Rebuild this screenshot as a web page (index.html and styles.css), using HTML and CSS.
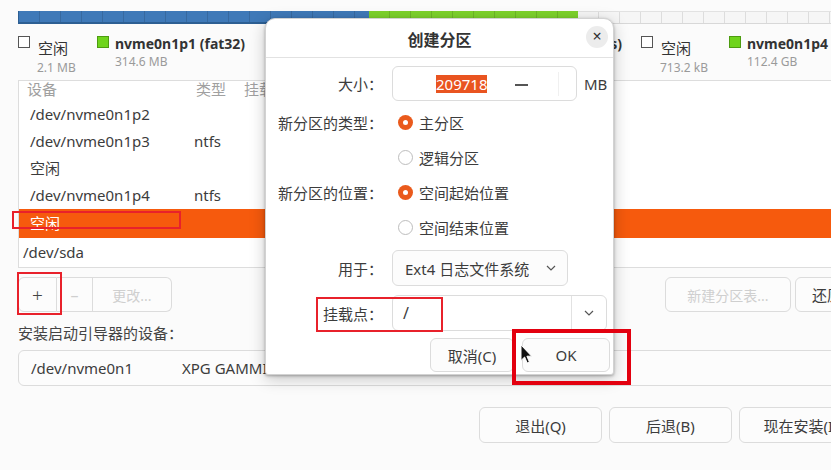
FILE: index.html
```html
<!DOCTYPE html>
<html lang="zh">
<head>
<meta charset="utf-8">
<title>创建分区</title>
<link rel="stylesheet" href="styles.css">
</head>
<body>
<div class="page">
  <div class="bar">
    <div class="seg blue"></div>
    <div class="seg green"></div>
    <div class="seg free"></div>
  </div>

  <div class="legend">
    <div class="li cjk"><span class="sw sw-free"></span><div class="lt"><div class="ln">空闲</div><div class="ls">2.1 MB</div></div></div>
    <div class="li"><span class="sw sw-green"></span><div class="lt"><div class="ln">nvme0n1p1 (fat32)</div><div class="ls">314.6 MB</div></div></div>
    <div class="li"><span class="sw sw-green"></span><div class="lt"><div class="ln">nvme0n1p2</div><div class="ls">16.8 MB</div></div></div>
    <div class="li li-end"><span class="sw sw-blue"></span><div class="lt"><div class="ln">nvme0n1p3 (ntfs)</div><div class="ls">209.7 GB</div></div></div>
    <div class="li cjk"><span class="sw sw-free"></span><div class="lt"><div class="ln">空闲</div><div class="ls">713.2 kB</div></div></div>
    <div class="li"><span class="sw sw-green"></span><div class="lt"><div class="ln">nvme0n1p4 (ntfs)</div><div class="ls">112.4 GB</div></div></div>
  </div>

  <div class="table">
    <div class="thead"><span>设备</span><span>类型</span><span>挂载点</span></div>
    <div class="row child"><span>/dev/nvme0n1p2</span><span></span><span></span></div>
    <div class="row child"><span>/dev/nvme0n1p3</span><span>ntfs</span><span></span></div>
    <div class="row child"><span>空闲</span><span></span><span></span></div>
    <div class="row child"><span>/dev/nvme0n1p4</span><span>ntfs</span><span></span></div>
    <div class="row child selected"><span>空闲</span><span></span><span></span></div>
    <div class="row top"><span>/dev/sda</span><span></span><span></span></div>
  </div>

  <div class="tools">
    <div class="group">
      <button class="btn gbtn g-plus">+</button>
      <button class="btn gbtn g-minus dis">–</button>
      <button class="btn gbtn g-change dis">更改...</button>
    </div>
    <div class="tools-right">
      <button class="btn b-newtable dis">新建分区表...</button>
      <button class="btn b-revert">还原</button>
    </div>
  </div>

  <div class="boot-label">安装启动引导器的设备：</div>
  <div class="boot-combo"><span class="bc-dev">/dev/nvme0n1</span><span class="bc-name">XPG GAMMIX S11 Pro</span></div>

  <div class="actions">
    <button class="btn act">退出(Q)</button>
    <button class="btn act">后退(B)</button>
    <button class="btn act">现在安装(I)</button>
  </div>
</div>

<div class="dialog">
  <div class="dlg-title">
    <span class="dlg-title-text">创建分区</span>
    <span class="dlg-close">×</span>
  </div>
  <div class="dlg-body">
    <div class="frow r-size">
      <span class="flabel">大小：</span>
      <div class="fctl">
        <div class="spin">
          <span class="spin-val"><span class="sel">209718</span></span>
          <span class="spin-minus"><span class="dash"></span></span>
          <span class="spin-rest"></span>
        </div>
        <span class="unit">MB</span>
      </div>
    </div>
    <div class="frow r-radio r-first">
      <span class="flabel">新分区的类型：</span>
      <div class="fctl opt"><span class="radio on"></span>主分区</div>
    </div>
    <div class="frow r-radio">
      <span class="flabel"></span>
      <div class="fctl opt"><span class="radio"></span>逻辑分区</div>
    </div>
    <div class="frow r-radio">
      <span class="flabel">新分区的位置：</span>
      <div class="fctl opt"><span class="radio on"></span>空间起始位置</div>
    </div>
    <div class="frow r-radio">
      <span class="flabel"></span>
      <div class="fctl opt"><span class="radio"></span>空间结束位置</div>
    </div>
    <div class="frow r-use">
      <span class="flabel">用于：</span>
      <div class="fctl">
        <div class="combo">
          <span>Ext4 日志文件系统</span>
          <svg class="chev" width="10" height="6" viewBox="0 0 10 6"><path d="M1 1 L5 5 L9 1" fill="none" stroke="#555" stroke-width="1.2"/></svg>
        </div>
      </div>
    </div>
    <div class="frow r-mount">
      <span class="flabel">挂载点：</span>
      <div class="fctl">
        <div class="mcombo">
          <span class="mentry">/</span>
          <span class="mbtn"><svg width="10" height="6" viewBox="0 0 10 6"><path d="M1 1 L5 5 L9 1" fill="none" stroke="#555" stroke-width="1.2"/></svg></span>
        </div>
      </div>
    </div>
    <div class="dlg-buttons">
      <button class="btn dbtn b-cancel">取消(C)</button>
      <button class="btn dbtn b-ok">OK</button>
    </div>
  </div>
</div>

<div class="mark m-row"></div>
<div class="mark m-plus"></div>
<div class="mark m-mount"></div>
<div class="mark m-ok"></div>

<svg class="cursor" width="13" height="21" viewBox="0 0 13 21">
  <path d="M1 1 L1 16.5 L4.6 13 L7.2 19 L9.4 18 L6.9 12.2 L11.6 12.2 Z" fill="#111" stroke="#fff" stroke-width="1"/>
</svg>
</body>
</html>
```

FILE: styles.css
```css
* { box-sizing: border-box; }

html, body {
  margin: 0;
  padding: 0;
}

body {
  width: 831px;
  height: 470px;
  overflow: hidden;
  position: relative;
  background: #fbfbfb;
  font-family: "Noto Sans", "Noto Sans CJK SC", sans-serif;
  color: #3c3c3c;
  font-size: 15px;
}

.page {
  width: 870px;
  padding: 11px 8px 0 18px;
}

/* ---------- partition bar ---------- */
.bar {
  display: flex;
  height: 13px;
}
.seg {
  height: 13px;
  background-image: repeating-linear-gradient(90deg, transparent 0 20px, rgba(0,0,0,0.13) 20px 21px);
}
.seg.blue {
  width: 351px;
  background-color: #3f79b8;
  border-bottom: 2px solid #2d5f93;
  border-left: 1px solid #2d5f93;
}
.seg.green {
  width: 209px;
  background-color: #7dd22c;
  border-bottom: 2px solid #66b51f;
}
.seg.free {
  flex: 1;
  background-color: #f6f6f6;
  background-image: repeating-linear-gradient(90deg, transparent 0 20px, rgba(0,0,0,0.1) 20px 21px);
  border-top: 1px solid #e2e2e2;
  border-bottom: 1px solid #d8d8d8;
}

/* ---------- legend ---------- */
.legend {
  margin-top: 11px;
  height: 45px;
  display: grid;
  grid-template-columns: 79px 170px 136px 238px 88px auto;
  align-items: start;
}
.li {
  display: flex;
  gap: 6px;
  align-items: flex-start;
  padding-top: 1px;
}
.li-end { justify-self: end; padding-right: 19px; }
.sw {
  width: 12px;
  height: 12px;
  flex: none;
}
.sw-free { background: #fff; border: 1px solid #555; }
.sw-green { background: #6fd41c; border: 1px solid #4d9c10; }
.sw-blue { background: #3f79b8; border: 1px solid #2d5f93; }
.li.cjk { gap: 8px; }
.ln {
  font-size: 14px;
  font-weight: 700;
  line-height: 16px;
  color: #333;
  white-space: nowrap;
}
.li.cjk .ln {
  font-size: 15px;
  font-weight: 400;
  line-height: 22px;
  margin-top: 1px;
}
.ls {
  font-size: 12px;
  line-height: 16px;
  color: #9a9a9a;
  margin-top: 2px;
  white-space: nowrap;
}
.li.cjk .ls { margin-top: 1px; margin-left: -1px; }

/* ---------- table ---------- */
.table {
  height: 188px;
  background: #fff;
  border: 1px solid #dddddd;
  border-right: none;
  overflow: hidden;
}
.thead, .row {
  display: grid;
  white-space: nowrap;
}
.thead {
  height: 20px;
  grid-template-columns: 169px 48px 1fr;
  padding-left: 8px;
  color: #a0a0a0;
  font-size: 15px;
  line-height: 22px;
  margin-top: -3px;
  margin-bottom: 3px;
}
.row {
  height: 27px;
  line-height: 27px;
  grid-template-columns: 164px 50px 1fr;
}
.row.child { padding-left: 11px; }
.row.top { padding-left: 4px; margin-top: 1px; }
.row.selected {
  background: #f65a0d;
  color: #fff;
  height: 29px;
  line-height: 29px;
}

/* ---------- buttons ---------- */
.btn {
  font-family: "Noto Sans", "Noto Sans CJK SC", sans-serif;
  font-size: 14px;
  color: #3c3c3c;
  background: #fcfcfc;
  border: 1px solid #dcdcdc;
  border-radius: 6px;
  padding: 0;
  margin: 0;
}
.btn.dis { color: #cfcfcf; }

.tools {
  margin-top: 9px;
  height: 35px;
  display: flex;
}
.group { display: flex; }
.gbtn { height: 35px; border-radius: 0; }
.g-plus { width: 39px; border-radius: 6px 0 0 6px; font-size: 19px; color: #444; font-weight: 300; }
.g-minus { width: 36px; border-left: none; font-size: 16px; }
.g-change { width: 79px; border-left: none; border-radius: 0 6px 6px 0; }
.tools-right {
  margin-left: auto;
  display: flex;
  gap: 4px;
}
.b-newtable { width: 126px; height: 35px; }
.b-revert { width: 67px; height: 35px; text-align: left; padding-left: 16px; font-size: 15px; }

.boot-label {
  height: 38px;
  padding-top: 11px;
  line-height: 20px;
  font-size: 15px;
  color: #444;
  white-space: nowrap;
}
.boot-combo {
  height: 36px;
  border: 1px solid #dcdcdc;
  border-radius: 6px;
  background: #fcfcfc;
  display: flex;
  align-items: center;
  padding-left: 12px;
  font-size: 15px;
  white-space: nowrap;
}
.bc-dev { width: 151px; }

.actions {
  margin-top: 21px;
  display: flex;
  justify-content: flex-end;
  gap: 7px;
}
.act { width: 123px; height: 36px; font-size: 15px; }

/* ---------- dialog ---------- */
.dialog {
  position: absolute;
  left: 265px;
  top: 18px;
  width: 349px;
  height: 357px;
  background: #ffffff;
  border-radius: 10px 10px 3px 3px;
  box-shadow: 0 1px 3px rgba(0,0,0,0.3), 0 4px 16px rgba(0,0,0,0.22);
  border: 1px solid #d2d2d2;
}
.dlg-title {
  height: 39px;
  border-bottom: 1px solid #e2e2e2;
  position: relative;
  text-align: center;
}
.dlg-title-text {
  display: inline-block;
  font-size: 16px;
  font-weight: 700;
  line-height: 22px;
  margin-top: 10px;
  color: #333;
}
.dlg-close {
  position: absolute;
  left: 320px;
  top: 7px;
  width: 22px;
  height: 22px;
  border-radius: 50%;
  background: #ececec;
  text-align: center;
  line-height: 21px;
  font-size: 16px;
  color: #333;
}
.dlg-body {
  padding-top: 8px;
}
.frow {
  display: grid;
  grid-template-columns: 117px 1fr;
  column-gap: 9px;
  align-items: center;
}
.flabel {
  text-align: right;
  white-space: nowrap;
  font-size: 15px;
  color: #3c3c3c;
}
.fctl {
  display: flex;
  align-items: center;
}
.r-size { height: 35px; }
.r-radio { height: 35px; }
.r-first { margin-top: 4px; }
.r-use { height: 36px; margin-top: 5px; }
.r-mount { height: 36px; margin-top: 9px; }

.spin {
  width: 185px;
  height: 35px;
  border: 1px solid #dcdcdc;
  border-radius: 6px;
  display: flex;
  align-items: center;
  background: #fff;
}
.spin-val {
  width: 95px;
  padding-left: 43px;
}
.sel {
  background: #e95420;
  color: #fff;
  line-height: 18px;
  display: inline-block;
}
.spin-minus {
  width: 70px;
  display: flex;
  justify-content: center;
  padding-right: 4px;
  padding-top: 3px;
}
.dash {
  width: 13px;
  height: 1.5px;
  background: #555;
}
.spin-rest {
  flex: 1;
  height: 24px;
  border-left: 1px solid #f0f0f0;
}
.unit { margin-left: 7px; font-size: 15px; }

.opt {
  padding-left: 6px;
  gap: 6px;
  font-size: 15px;
  white-space: nowrap;
}
.radio {
  width: 15px;
  height: 15px;
  border-radius: 50%;
  border: 1px solid #bdbdbd;
  background: #fff;
  flex: none;
  position: relative;
}
.radio.on {
  border: none;
  background: #ea5a1c;
}
.radio.on::after {
  content: "";
  position: absolute;
  left: 5px;
  top: 5px;
  width: 5px;
  height: 5px;
  border-radius: 50%;
  background: #fff;
}

.combo {
  width: 176px;
  height: 36px;
  border: 1px solid #dcdcdc;
  border-radius: 6px;
  background: #fcfcfc;
  display: flex;
  align-items: center;
  justify-content: space-between;
  padding: 0 11px 0 12px;
  font-size: 15px;
  white-space: nowrap;
}
.mcombo {
  width: 215px;
  height: 36px;
  border: 1px solid #dcdcdc;
  border-radius: 6px;
  background: #fff;
  display: flex;
  align-items: stretch;
}
.mentry {
  width: 178px;
  padding-left: 10px;
  line-height: 34px;
  font-size: 16px;
}
.mbtn {
  flex: 1;
  border-left: 1px solid #e2e2e2;
  display: flex;
  align-items: center;
  justify-content: center;
}

.dlg-buttons {
  margin-top: 7px;
  display: flex;
  justify-content: flex-end;
  gap: 8px;
  padding-right: 3px;
}
.dbtn { height: 34px; font-size: 15px; }
.b-cancel { width: 84px; }
.b-ok { width: 88px; }

/* ---------- annotation marks ---------- */
.mark {
  position: absolute;
  border: 2px solid #e8212b;
}
.m-row { left: 12px; top: 211px; width: 169px; height: 18px; }
.m-plus { left: 17px; top: 272px; width: 45px; height: 43px; }
.m-mount { left: 316px; top: 297px; width: 127px; height: 35px; }
.m-ok { left: 512px; top: 329px; width: 119px; height: 56px; border-width: 4px; border-color: #e3000f; }

.cursor {
  position: absolute;
  left: 520px;
  top: 344px;
}
```
